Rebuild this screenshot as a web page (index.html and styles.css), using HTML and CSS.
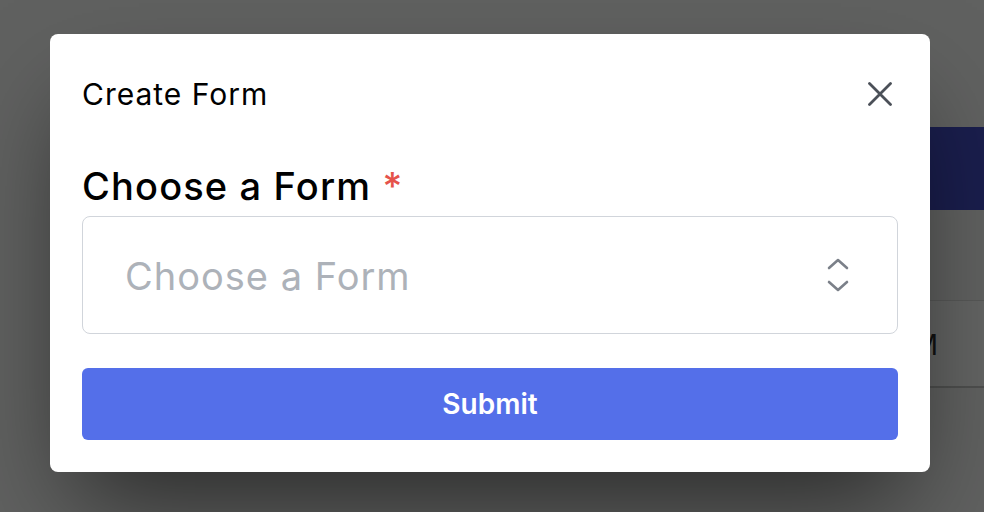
FILE: index.html
```html
<!DOCTYPE html>
<html lang="en">
<head>
<meta charset="utf-8">
<title>Create Form</title>
<link rel="stylesheet" href="styles.css">
</head>
<body>
<div class="page">
  <div class="banner"></div>
  <div class="table">
    <div class="row"><span class="cell-text">PM</span></div>
  </div>
</div>
<div class="overlay">
  <div class="modal">
    <div class="modal-header">
      <h2 class="modal-title">Create Form</h2>
      <button class="close-btn" aria-label="Close">
        <svg width="24" height="24" viewBox="0 0 24 24"><path d="M1.5 1.5L22.5 22.5M22.5 1.5L1.5 22.5" stroke="#4b5058" stroke-width="2.8" stroke-linecap="round" fill="none"/></svg>
      </button>
    </div>
    <form class="form">
      <label class="field-label">Choose a Form <span class="req">*</span></label>
      <div class="select">
        <span class="placeholder">Choose a Form</span>
        <svg class="chevrons" width="24" height="36" viewBox="0 0 24 36"><path d="M3 11L12 3L21 11M3 25L12 33L21 25" stroke="#7b8089" stroke-width="2.6" stroke-linecap="round" stroke-linejoin="round" fill="none"/></svg>
      </div>
      <button type="button" class="submit">Submit</button>
    </form>
  </div>
</div>
</body>
</html>
```
FILE: styles.css
```css
html, body {
  margin: 0;
  padding: 0;
}
body {
  width: 984px;
  height: 512px;
  overflow: hidden;
  background: #606160;
  font-family: Inter, "Noto Sans", sans-serif;
  position: relative;
}
.page {
  display: flex;
  flex-direction: column;
  padding-top: 127px;
  padding-left: 500px;
}
.banner {
  height: 83px;
  background: #1a1e4d;
}
.table {
  margin-top: 90px;
  border-top: 1px solid #575857;
}
.row {
  height: 85px;
  border-bottom: 2px solid #4e4f4e;
  display: flex;
  align-items: center;
  justify-content: flex-end;
  padding-right: 46px;
  background: #636463;
}
.cell-text {
  font-size: 28px;
  color: #111;
  padding-top: 2px;
}
.overlay {
  position: absolute;
  inset: 0;
}
.modal {
  position: absolute;
  left: 50px;
  top: 34px;
  width: 816px;
  padding: 32px;
  background: #fff;
  border-radius: 8px;
  box-shadow: 0 50px 100px -24px rgba(0, 0, 0, 0.6);
}
.modal-header {
  height: 56px;
  display: flex;
  align-items: center;
  justify-content: space-between;
}
.modal-title {
  margin: 0;
  font-size: 30px;
  font-weight: 400;
  line-height: 56px;
  letter-spacing: 1px;
  color: #000;
}
.close-btn {
  border: 0;
  background: none;
  padding: 0;
  margin-right: 6px;
  width: 24px;
  height: 24px;
  display: flex;
}
.form {
  display: flex;
  flex-direction: column;
  margin: 36px 0 0;
}
.field-label {
  font-size: 38px;
  font-weight: 500;
  line-height: 56px;
  letter-spacing: 1.15px;
  color: #000;
  margin-bottom: 2px;
}
.req {
  color: #e5534b;
}
.select {
  height: 116px;
  border: 1px solid #d1d5db;
  border-radius: 8px;
  display: flex;
  align-items: center;
  justify-content: space-between;
  padding: 0 47px 0 42px;
}
.placeholder {
  font-size: 38px;
  letter-spacing: 1px;
  color: #adb2b9;
  padding-top: 2px;
}
.chevrons {
  display: block;
}
.submit {
  margin-top: 34px;
  height: 72px;
  border: 0;
  border-radius: 6px;
  background: #546fe9;
  color: #fff;
  font-family: Inter, "Noto Sans", sans-serif;
  font-size: 28px;
  font-weight: 600;
}
```
